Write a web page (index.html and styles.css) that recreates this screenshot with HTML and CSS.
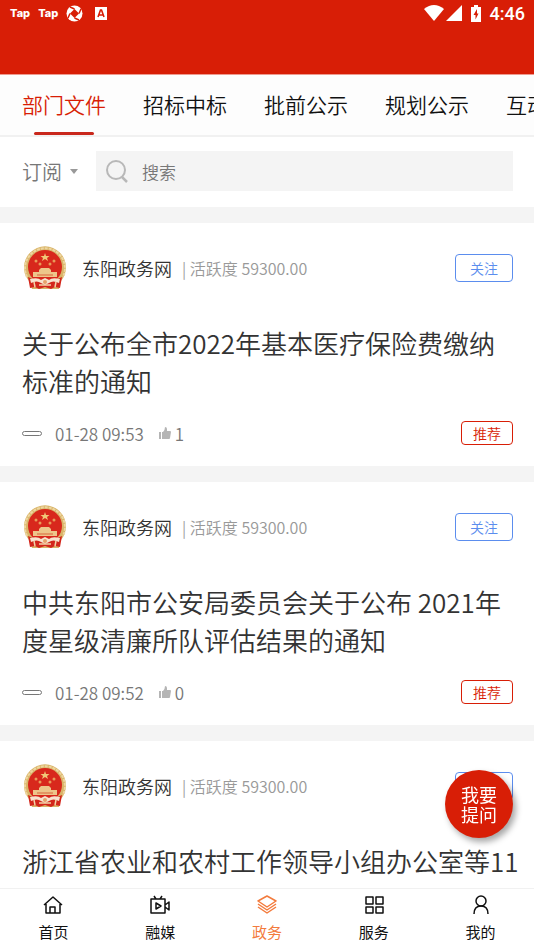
FILE: index.html
```html
<!DOCTYPE html>
<html lang="zh-CN">
<head>
    <meta charset="UTF-8" />
    <title>政务</title>
    <meta name="viewport" content="width=device-width, initial-scale=1.0" />
    <link rel="stylesheet" href="styles.css">
</head>
<body>
    <!-- Shared icons -->
    <svg class="sprite" aria-hidden="true">
        <symbol id="emblem" viewBox="0 0 44 44">
            <path d="M7 36 A21 21 0 1 1 37 36 L36 43 H9 Z" fill="#d9b56a"/>
            <path d="M4 31 A20 20 0 1 1 40 31" fill="none" stroke="#eed6a0" stroke-width="2" stroke-dasharray="3 1"/>
            <circle cx="22" cy="21" r="17" fill="#d8281c"/>
            <path d="M5 31 L12 34 H32 L39 31 L37 42 L32 41 L28 43 L22 41 L16 43 L12 41 L7 42 Z" fill="#d3261b"/>
            <path d="M22 7 L23 10 H26.500 L24 12 L25 15 L22 13 L19 15 L20 12 L17.500 10 H21 Z" fill="#f0c878"/>
            <g fill="#e89a58">
                <circle cx="13" cy="15" r="1.500"/>
                <circle cx="17" cy="18" r="1.500"/>
                <circle cx="27" cy="18" r="1.500"/>
                <circle cx="31" cy="15" r="1.500"/>
            </g>
            <path d="M18 22 H26 L28 24 V26 H34 V31 H10 V26 H16 V24 Z" fill="#edc68a"/>
            <path d="M14 29 H30" stroke="#d9653c" stroke-width="1"/>
            <path d="M7 33 Q15 31 18 34 L22 32 L26 34 Q29 31 37 33 L36 37 Q30 34 26 37 L22 39 L18 37 Q14 34 8 37 Z" fill="#f7e3cf"/>
            <path d="M11 36 L12 41 M33 36 L32 41 M16 39 L28 39" stroke="#f2d3a8" stroke-width="1.500"/>
            <circle cx="22" cy="36" r="2" fill="#e6a16a"/>
        </symbol>
        <symbol id="thumb" viewBox="0 0 12 12">
            <path d="M0 5 H2 V12 H0 Z M3 5 H4 Q6 3 6 0 Q8 0 8 2 V4 H11 Q12 4 12 5 L11 11 Q11 12 10 12 H3 Z" fill="#b5b5b5"/>
        </symbol>
    </svg>

    <header class="status-bar">
        <div class="status-icons">
            <span class="tap">Tap</span>
            <span class="tap">Tap</span>
            <svg width="17" height="17" viewBox="0 0 17 17">
                <circle cx="8.500" cy="8.500" r="8" fill="#fff"/>
                <path d="M8.500 4 L13 8.500 L8.500 13 L4 8.500 Z" fill="#d81e06"/>
                <path d="M8.500 4 L4 2 M13 8.500 L15 4 M8.500 13 L13 15 M4 8.500 L2 13" stroke="#d81e06" stroke-width="1.500"/>
            </svg>
            <svg class="app-icon" width="12" height="13" viewBox="0 0 12 13">
                <path d="M0 0 H12 V13 H0 Z" fill="#fff"/>
                <path d="M3 10 L5.500 3 H6.500 L9 10 M4 8 H8" fill="none" stroke="#d81e06" stroke-width="1.600"/>
            </svg>
        </div>
        <div class="status-icons system">
            <svg width="20" height="16" viewBox="0 0 20 16">
                <path d="M0 4 Q10 -4 20 4 L10 16 Z" fill="#fff"/>
            </svg>
            <svg width="16" height="16" viewBox="0 0 16 16">
                <path d="M16 0 V16 H0 Z" fill="#fff"/>
            </svg>
            <svg class="battery" width="10" height="17" viewBox="0 0 10 17">
                <path d="M3 0 H7 V2 H10 V17 H0 V2 H3 Z" fill="#fff"/>
                <path d="M6 4 L2.500 10 H4.500 V14.500 L7.500 8.500 H6 Z" fill="#d81e06"/>
            </svg>
            <span class="clock">4:46</span>
        </div>
    </header>

    <nav class="tabs">
        <a href="#" class="active">部门文件</a>
        <a href="#">招标中标</a>
        <a href="#">批前公示</a>
        <a href="#">规划公示</a>
        <a href="#">互动交流</a>
    </nav>

    <form class="search-bar">
        <div class="filter">
            <select aria-label="订阅">
                <option>订阅</option>
            </select>
        </div>
        <label class="search-box">
            <svg width="22" height="23" viewBox="0 0 22 23" fill="none" stroke="#b8b8b8" stroke-width="2">
                <circle cx="10" cy="10" r="9"/>
                <path d="M16 17 L21 22" stroke-width="2.500"/>
            </svg>
            <input type="search" placeholder="搜索" aria-label="搜索" />
        </label>
    </form>

    <main class="feed">
        <article class="card">
            <div class="source">
                <svg class="avatar"><use href="#emblem"/></svg>
                <span class="name">东阳政务网</span>
                <span class="activity">| 活跃度 59300.00</span>
                <button type="button" class="follow">关注</button>
            </div>
            <h2>关于公布全市2022年基本医疗保险费缴纳标准的通知</h2>
            <div class="meta">
                <span class="dash"></span>
                <time>01-28 09:53</time>
                <span class="likes"><svg width="12" height="12"><use href="#thumb"/></svg>1</span>
                <span class="tag">推荐</span>
            </div>
        </article>

        <article class="card">
            <div class="source">
                <svg class="avatar"><use href="#emblem"/></svg>
                <span class="name">东阳政务网</span>
                <span class="activity">| 活跃度 59300.00</span>
                <button type="button" class="follow">关注</button>
            </div>
            <h2>中共东阳市公安局委员会关于公布 2021年度星级清廉所队评估结果的通知</h2>
            <div class="meta">
                <span class="dash"></span>
                <time>01-28 09:52</time>
                <span class="likes"><svg width="12" height="12"><use href="#thumb"/></svg>0</span>
                <span class="tag">推荐</span>
            </div>
        </article>

        <article class="card">
            <div class="source">
                <svg class="avatar"><use href="#emblem"/></svg>
                <span class="name">东阳政务网</span>
                <span class="activity">| 活跃度 59300.00</span>
                <button type="button" class="follow">关注</button>
            </div>
            <h2 class="single-line">浙江省农业和农村工作领导小组办公室等11</h2>
        </article>
    </main>

    <button type="button" class="ask">我要<br>提问</button>

    <nav class="bottom-nav">
        <a href="#">
            <svg width="20" height="20" viewBox="0 0 20 20">
                <path d="M1 10 L10 2 L19 10 M3 9 V18 H17 V9 M7 18 V12 H12 V18"/>
            </svg>
            首页
        </a>
        <a href="#">
            <svg width="20" height="20" viewBox="0 0 20 20">
                <path d="M1 4 H15 V18 H1 Z M4 1 L6 4 M12 1 L10 4 M15 10 L19 7 V15 L15 12 M6 8 V14 L11 11 Z"/>
            </svg>
            融媒
        </a>
        <a href="#" class="active">
            <svg width="20" height="20" viewBox="0 0 20 20">
                <path d="M10 1 L19 6 L10 12 L1 6 Z M1 9 L10 15 L19 9 M1 12 L10 18 L19 12"/>
            </svg>
            政务
        </a>
        <a href="#">
            <svg width="20" height="20" viewBox="0 0 20 20">
                <path d="M2 2 H9 V9 H2 Z M12 2 H19 V9 H12 Z M2 12 H9 V18 H2 Z M12 12 H19 V18 H12 Z"/>
            </svg>
            服务
        </a>
        <a href="#">
            <svg width="20" height="20" viewBox="0 0 20 20">
                <circle cx="10" cy="6" r="5"/>
                <path d="M3 19 Q3 11 10 11 Q17 11 17 19"/>
            </svg>
            我的
        </a>
    </nav>
</body>
</html>
```

FILE: styles.css
```css
:root {
    --red: #d81e06;
    --orange: #f37b3d;
    --blue: #5b8dee;
    --text-color: #333;
    --gray: #777;
    --light-gray: #f4f4f4;
    --white: #fff;
}

* {
    box-sizing: border-box;
}

body {
    margin: 0;
    height: 100vh;
    display: flex;
    flex-direction: column;
    overflow: hidden;
    font-family: "Noto Sans CJK SC", sans-serif;
    font-weight: 350;
    color: var(--text-color);
    background: var(--white);
}

a {
    color: inherit;
    text-decoration: none;
}

svg {
    display: block;
    flex-shrink: 0;
}

.sprite {
    position: absolute;
    width: 0;
    height: 0;
}

/* Status bar */
.status-bar {
    display: flex;
    justify-content: space-between;
    align-items: flex-start;
    flex-shrink: 0;
    height: 75px;
    padding: 0 9px 0 10px;
    background: var(--red);
    border-bottom: 1px solid #ee9a8f;
    color: var(--white);
}

.status-icons {
    display: flex;
    align-items: center;
    gap: 8px;
    height: 26px;
}

.status-icons.system {
    gap: 2px;
}

.tap {
    font: 800 11px Inter, sans-serif;
}

.app-icon {
    margin-left: 4px;
}

.battery {
    margin: 0 7px;
}

.clock {
    font: 500 18px Roboto, sans-serif;
}

/* Category tabs */
.tabs {
    display: flex;
    flex-shrink: 0;
    gap: 37px;
    height: 62px;
    padding-left: 22px;
    overflow: hidden;
    background: #fdfdfd;
    border-bottom: 2px solid #f1f1f1;
    font-size: 21px;
    line-height: 58px;
    white-space: nowrap;
    color: #111;
}

.tabs a {
    display: flex;
    flex-direction: column;
    align-items: center;
    flex-shrink: 0;
}

.tabs .active {
    color: var(--red);
}

.tabs .active::after {
    content: "";
    width: 60px;
    height: 3px;
    margin-top: -1px;
    border-radius: 2px;
    background: #c9281c;
}

/* Filter and search */
.search-bar {
    display: flex;
    align-items: center;
    flex-shrink: 0;
    gap: 18px;
    margin: 0;
    padding: 14px 21px 16px 22px;
}

.filter {
    display: flex;
    align-items: center;
    gap: 8px;
}

.filter::after {
    content: "";
    border: 4px solid transparent;
    border-top: 5px solid #999;
    border-bottom: 0;
}

.filter select {
    appearance: none;
    padding: 0;
    border: 0;
    background: none;
    font-family: inherit;
    font-size: 20px;
    font-weight: inherit;
    color: var(--gray);
}

.search-box {
    display: flex;
    align-items: center;
    flex: 1;
    gap: 14px;
    height: 40px;
    padding: 0 10px;
    background: var(--light-gray);
}

.search-box input {
    flex: 1;
    min-width: 0;
    padding: 0;
    border: 0;
    outline: none;
    background: none;
    font-family: inherit;
    font-size: 17px;
    font-weight: inherit;
}

.search-box input::placeholder {
    color: var(--gray);
}

/* News feed */
.feed {
    flex: 1;
    min-height: 0;
    overflow: hidden;
}

.card {
    padding: 23px 21px 21px 22px;
    border-top: 16px solid var(--light-gray);
}

.source {
    display: flex;
    align-items: center;
    height: 44px;
}

.avatar {
    width: 44px;
    height: 44px;
    margin: 0 15px 0 1px;
}

.name {
    font-size: 18px;
}

.activity {
    margin-left: 10px;
    font-size: 16px;
    color: #999;
}

.follow,
.tag {
    margin-left: auto;
    padding: 0 14px;
    border: 1px solid var(--blue);
    border-radius: 4px;
    background: none;
    font-family: inherit;
    font-size: 14px;
    font-weight: inherit;
    line-height: 26px;
    color: var(--blue);
}

.tag {
    padding: 0 11px;
    border-color: var(--red);
    line-height: 22px;
    color: var(--red);
}

.card h2 {
    margin: 34px 0 21px;
    font-size: 26px;
    font-weight: inherit;
    line-height: 38px;
}

.card .single-line {
    white-space: nowrap;
}

.meta {
    display: flex;
    align-items: center;
    height: 24px;
    font-size: 17px;
    color: var(--gray);
}

.dash {
    width: 20px;
    height: 5px;
    margin-right: 13px;
    border: 1px solid var(--gray);
    border-radius: 3px;
}

.likes {
    display: flex;
    align-items: center;
    gap: 4px;
    margin-left: 15px;
}

/* Floating question button */
.ask {
    position: fixed;
    right: 21px;
    bottom: 112px;
    width: 68px;
    height: 68px;
    padding: 0;
    border: 0;
    border-radius: 50%;
    background: var(--red);
    box-shadow: 3px 4px 6px rgba(0, 0, 0, 0.35);
    font-family: inherit;
    font-size: 18px;
    line-height: 20px;
    color: var(--white);
}

/* Bottom navigation */
.bottom-nav {
    display: grid;
    grid-template-columns: repeat(5, 1fr);
    flex-shrink: 0;
    height: 62px;
    padding-top: 6px;
    border-top: 1px solid #f1f1f1;
    background: var(--white);
    font-size: 15px;
    font-weight: 400;
    line-height: 24px;
    color: #111;
}

.bottom-nav a {
    display: flex;
    flex-direction: column;
    align-items: center;
    gap: 5px;
}

.bottom-nav svg {
    fill: none;
    stroke: currentColor;
    stroke-width: 1.5;
    stroke-linejoin: round;
}

.bottom-nav .active {
    color: var(--orange);
}
```
